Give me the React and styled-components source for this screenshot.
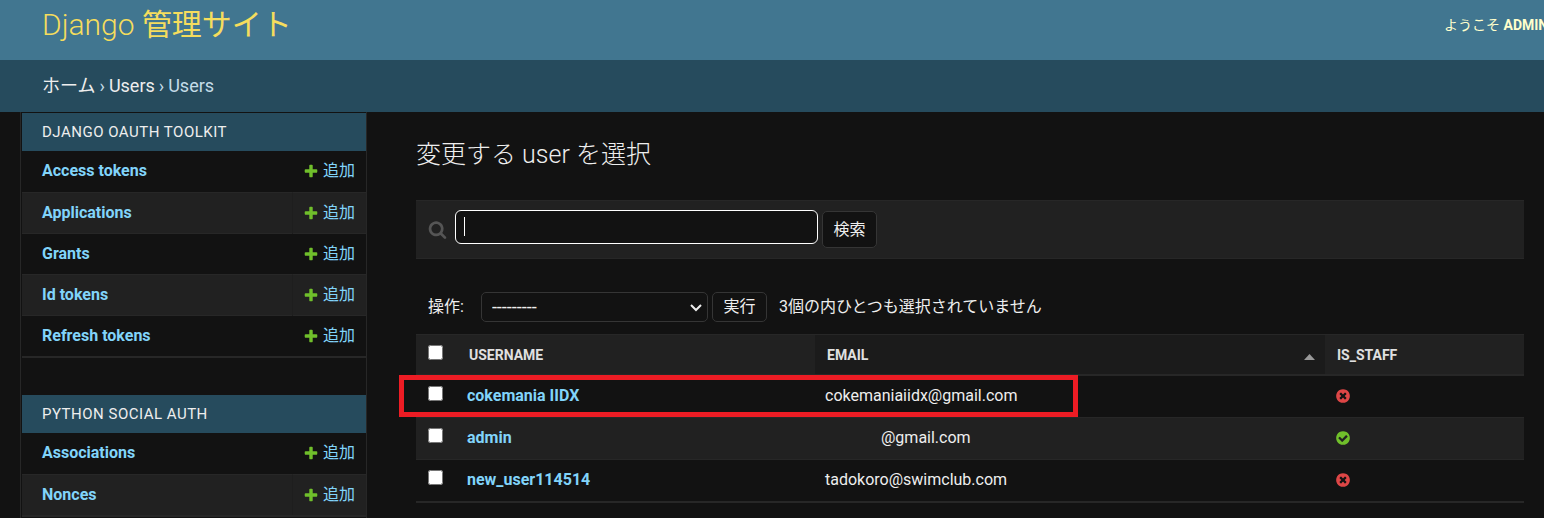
import React from "react";
import styled, { createGlobalStyle } from "styled-components";

const font = `Roboto, "Noto Sans CJK JP", sans-serif`;

const color = {
  body: "#121212",
  darkened: "#212121",
  selected: "#1b1b1b",
  hairline: "#272727",
  border: "#353535",
  primary: "#264b5d",
  secondary: "#417690",
  text: "#eeeeee",
  quiet: "#e0e0e0",
  link: "#81d4fa",
  accent: "#f5dd5d",
  header: "#ffffcc",
};

const Global = createGlobalStyle`
  *, *::before, *::after { box-sizing: border-box; }
  body {
    margin: 0;
    background: ${color.body};
    color: ${color.text};
    font: 16px/20px ${font};
    overflow: hidden;
  }
  a { color: ${color.link}; text-decoration: none; }
  button, input, select { font: inherit; color: inherit; margin: 0; }
`;

const Page = styled.div`
  display: flex;
  flex-direction: column;
  min-height: 100vh;
`;

const Header = styled.header`
  display: flex;
  align-items: center;
  justify-content: space-between;
  padding: 0 0 10px 42px;
  min-height: 60px;
  background: ${color.secondary};
  color: ${color.header};
  overflow: hidden;
`;

const SiteName = styled.h1`
  margin: 0;
  font-size: 30px;
  line-height: 40px;
  font-weight: 300;
  a { color: ${color.accent}; }
  span { font-weight: 400; }
`;

const UserTools = styled.div`
  flex: 0 0 100px;
  min-width: 0;
  font-size: 14px;
  white-space: nowrap;
`;

const Breadcrumbs = styled.nav`
  display: flex;
  align-items: center;
  gap: 4px;
  min-height: 52px;
  padding: 0 42px;
  background: ${color.primary};
  color: #c4dce8;
  font-size: 18px;
  a { color: ${color.text}; }
`;

const Columns = styled.div`
  display: flex;
  flex: 1;
`;

const Sidebar = styled.nav`
  flex: 0 0 347px;
  margin-left: 20px;
  padding: 1px 0 0 1px;
  border: solid ${color.hairline};
  border-width: 0 1px;
`;

const Module = styled.table`
  width: 100%;
  margin-bottom: 37px;
  border-collapse: separate;
  border-spacing: 0;
  border-bottom: 2px solid ${color.hairline};
  &:last-child { margin-bottom: 0; }
`;

const Caption = styled.caption`
  padding: 0 20px;
  background: ${color.primary};
  font-size: 15px;
  line-height: 38px;
  letter-spacing: 0.5px;
  text-align: left;
  text-transform: uppercase;
`;

const ModelRow = styled.tr`
  height: 41px;
  background: ${color.body};
  &:nth-child(even) { background: ${color.darkened}; }
  th, td {
    padding: 0;
    border-top: 1px solid ${color.hairline};
  }
  &:first-child th, &:first-child td {
    padding-bottom: 2px;
    border-top-color: transparent;
  }
  && th { padding-left: 20px; text-align: left; font-weight: 700; }
  && td { width: 74px; padding-right: 11px; border-left: 1px solid transparent; }
  &&:nth-child(even) td { border-left-color: #1e1e1e; }
`;

const AddLink = styled.a`
  display: flex;
  align-items: center;
  justify-content: flex-end;
  gap: 4px;
  white-space: nowrap;
`;

const Main = styled.main`
  flex: 1;
  min-width: 0;
  padding: 25px 20px 0 49px;
`;

const Title = styled.h2`
  margin: 0 0 28px;
  font-size: 25px;
  line-height: 35px;
  font-weight: 300;
`;

const SearchBar = styled.form`
  display: flex;
  align-items: center;
  height: 59px;
  padding: 0 12px;
  background: ${color.darkened};
  border: solid ${color.hairline};
  border-width: 1px 0;
  label { display: flex; }
`;

const SearchField = styled.span`
  position: relative;
  margin: 0 4px 5px 8px;
  width: 363px;
`;

const SearchInput = styled.input`
  display: block;
  width: 100%;
  height: 34px;
  padding: 0 8px;
  background: ${color.body};
  border: 1px solid #ffffff;
  border-radius: 6px;
  outline: none;
  caret-color: transparent;
`;

const Caret = styled.span`
  position: absolute;
  left: 9px;
  top: 7px;
  width: 1px;
  height: 19px;
  background: #ffffff;
`;

const Button = styled.button`
  width: 55px;
  height: ${(p) => (p.$tall ? 37 : 30)}px;
  padding: 0;
  background: ${color.body};
  border: 1px solid ${color.border};
  border-radius: 5px;
`;

const Actions = styled.form`
  display: flex;
  align-items: center;
  margin: 33px 0 12px;
  padding-left: 12px;
`;

const SelectWrap = styled.span`
  display: grid;
  align-items: center;
  justify-items: end;
  width: 227px;
  margin: 0 4px 0 17px;
  > * { grid-area: 1 / 1; }
  svg { margin-right: 5px; pointer-events: none; }
`;

const Select = styled.select`
  appearance: none;
  width: 100%;
  height: 30px;
  padding: 0 10px;
  background: ${color.body};
  border: 1px solid ${color.border};
  border-radius: 5px;
  font-size: 18px;
`;

const Counter = styled.span`
  margin-left: 12px;
`;

const Results = styled.table`
  width: 100%;
  table-layout: fixed;
  border-collapse: separate;
  border-spacing: 0;
  border-bottom: 1px solid ${color.hairline};
`;

const HeadCell = styled.th`
  height: 42px;
  width: ${(p) => p.$width || "auto"};
  padding: 0 10px 0 12px;
  background: ${(p) => (p.$sorted ? color.selected : color.darkened)};
  border: solid ${color.hairline};
  border-width: 1px 0 2px;
  color: ${color.quiet};
  font-size: 14px;
  font-weight: 700;
  text-align: left;
  text-transform: uppercase;
  a { color: inherit; }
`;

const SortLabel = styled.span`
  display: flex;
  align-items: center;
  justify-content: space-between;
  svg { margin-top: 4px; }
`;

const UserRow = styled.tr`
  position: relative;
  height: 42px;
  &:nth-child(even) { background: ${color.darkened}; }
  th, td {
    padding: 0 10px 2px;
    border-bottom: 1px solid ${color.hairline};
    text-align: left;
  }
  td:first-child { padding-left: 12px; }
  td svg { display: block; }
`;

const Check = styled.input`
  display: block;
  width: 15px;
  height: 15px;
  && { margin: 0 0 4px; }
`;

const Redacted = styled.span`
  display: inline-block;
  width: 56px;
`;

const Highlight = styled.span`
  position: absolute;
  top: -1px;
  left: -17px;
  width: 679px;
  height: 42px;
  border: 5px solid #ed1c24;
  pointer-events: none;
`;

const DISC =
  "m387-226q0 209-103 385.5t-279.5 279.5-385.5 103-385.5-103-279.5-279.5-103-385.5 103-385.5 279.5-279.5 385.5-103 385.5 103 279.5 279.5 103 385.5z";

const glyphs = {
  add: "M1600 796v192q0 40-28 68t-68 28h-416v416q0 40-28 68t-68 28h-192q-40 0-68-28t-28-68v-416h-416q-40 0-68-28t-28-68v-192q0-40 28-68t68-28h416v-416q0-40 28-68t68-28h192q40 0 68 28t28 68v416h416q40 0 68 28t28 68z",
  no:
    "M1277 1122q0-26-19-45l-181-181 181-181q19-19 19-45 0-27-19-46l-90-90q-19-19-46-19-26 0-45 19l-181 181-181-181q-19-19-45-19-27 0-46 19l-90 90q-19 19-19 46 0 26 19 45l181 181-181 181q-19 19-19 45 0 27 19 46l90 90q19 19 46 19 26 0 45-19l181-181 181 181q19 19 45 19 27 0 46-19l90-90q19-19 19-46z" +
    DISC,
  yes: "M1412 734q0-28-18-46l-91-90q-19-19-45-19t-45 19l-408 407-226-226q-19-19-45-19t-45 19l-91 90q-18 18-18 46 0 27 18 45l362 362q19 19 45 19 27 0 46-19l543-543q18-18 18-45zm252 162q0 209-103 385.5t-279.5 279.5-385.5 103-385.5-103-279.5-279.5-103-385.5 103-385.5 279.5-279.5 385.5-103 385.5 103 279.5 279.5 103 385.5z",
  search:
    "M1216 832q0-185-131.5-316.5t-316.5-131.5-316.5 131.5-131.5 316.5 131.5 316.5 316.5 131.5 316.5-131.5 131.5-316.5zm512 832q0 52-38 90t-90 38q-54 0-90-38l-343-342q-179 124-399 124-143 0-273.5-55.5t-225-150-150-225-55.5-273.5 55.5-273.5 150-225 225-150 273.5-55.5 273.5 55.5 225 150 150 225 55.5 273.5q0 220-124 399l343 343q37 37 37 90z",
};

function Glyph({ name, size = 16, fill, label }) {
  return (
    <svg
      width={size}
      height={size}
      viewBox="0 0 1792 1792"
      role={label ? "img" : undefined}
      aria-label={label}
      aria-hidden={label ? undefined : true}
    >
      <path d={glyphs[name]} fill={fill} />
    </svg>
  );
}

const apps = [
  {
    name: "Django OAuth Toolkit",
    models: ["Access tokens", "Applications", "Grants", "Id tokens", "Refresh tokens"],
  },
  { name: "Python Social Auth", models: ["Associations", "Nonces"] },
];

const users = [
  { name: "cokemania IIDX", email: "cokemaniaiidx@gmail.com", staff: false, highlighted: true },
  { name: "admin", email: "@gmail.com", staff: true, redacted: true },
  { name: "new_user114514", email: "tadokoro@swimclub.com", staff: false },
];

export default function App() {
  return (
    <Page lang="ja">
      <Global />
      <Header>
        <SiteName>
          <a href="#home">
            Django <span>管理サイト</span>
          </a>
        </SiteName>
        <UserTools>
          ようこそ <strong>ADMIN</strong>
        </UserTools>
      </Header>
      <Breadcrumbs>
        <a href="#home">ホーム</a>
        <span>›</span>
        <a href="#users-app">Users</a>
        <span>›</span>
        <span>Users</span>
      </Breadcrumbs>
      <Columns>
        <Sidebar>
          {apps.map((app) => (
            <Module key={app.name}>
              <Caption>{app.name}</Caption>
              <tbody>
                {app.models.map((model) => (
                  <ModelRow key={model}>
                    <th scope="row">
                      <a href="#model">{model}</a>
                    </th>
                    <td>
                      <AddLink href="#add">
                        <Glyph name="add" fill="#70bf2b" />
                        追加
                      </AddLink>
                    </td>
                  </ModelRow>
                ))}
              </tbody>
            </Module>
          ))}
        </Sidebar>
        <Main>
          <Title>変更する user を選択</Title>
          <SearchBar onSubmit={(e) => e.preventDefault()}>
            <label htmlFor="searchbar">
              <Glyph name="search" size={19} fill="#555555" label="検索" />
            </label>
            <SearchField>
              <SearchInput id="searchbar" type="text" />
              <Caret />
            </SearchField>
            <Button $tall type="submit">検索</Button>
          </SearchBar>
          <Actions onSubmit={(e) => e.preventDefault()}>
            <label htmlFor="action">操作:</label>
            <SelectWrap>
              <Select id="action">
                <option>---------</option>
              </Select>
              <svg width="14" height="14" viewBox="0 0 14 14" fill="none" aria-hidden="true">
                <path d="M2 5l5 5 5-5" stroke="#eeeeee" strokeWidth="2" />
              </svg>
            </SelectWrap>
            <Button type="submit">実行</Button>
            <Counter>3個の内ひとつも選択されていません</Counter>
          </Actions>
          <Results>
            <thead>
              <tr>
                <HeadCell $width="41px">
                  <Check type="checkbox" aria-label="すべて選択" />
                </HeadCell>
                <HeadCell $width="358px">
                  <a href="#sort-username">Username</a>
                </HeadCell>
                <HeadCell $sorted>
                  <SortLabel>
                    <a href="#sort-email">Email</a>
                    <svg width="11" height="6" viewBox="0 0 11 6" aria-hidden="true">
                      <path d="M5.500 0L11 6H0z" fill="#999999" />
                    </svg>
                  </SortLabel>
                </HeadCell>
                <HeadCell $width="199px">
                  <a href="#sort-staff">Is_staff</a>
                </HeadCell>
              </tr>
            </thead>
            <tbody>
              {users.map((user) => (
                <UserRow key={user.name}>
                  <td>
                    <Check type="checkbox" aria-label={user.name} />
                    {user.highlighted && <Highlight />}
                  </td>
                  <th scope="row">
                    <a href="#user">{user.name}</a>
                  </th>
                  <td>
                    {user.redacted && <Redacted />}
                    {user.email}
                  </td>
                  <td>
                    <Glyph
                      name={user.staff ? "yes" : "no"}
                      fill={user.staff ? "#70bf2b" : "#dd4646"}
                      label={user.staff ? "True" : "False"}
                    />
                  </td>
                </UserRow>
              ))}
            </tbody>
          </Results>
        </Main>
      </Columns>
    </Page>
  );
}
